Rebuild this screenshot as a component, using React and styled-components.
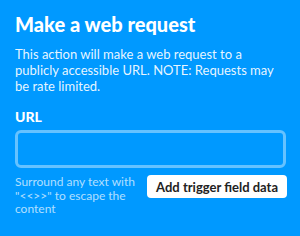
import React from 'react';
import styled, { createGlobalStyle } from 'styled-components';

const GlobalStyle = createGlobalStyle`
  html, body {
    margin: 0;
    padding: 0;
    background: #0099ff;
  }
  * {
    box-sizing: border-box;
  }
`;

const Panel = styled.div`
  width: 300px;
  height: 236px;
  background: #0099ff;
  color: #fff;
  font-family: Lato, "Noto Sans", sans-serif;
  padding: 12px 14px 0 15px;
  overflow: hidden;
`;

const Title = styled.h2`
  margin: 0;
  font-size: 20px;
  font-weight: 900;
  line-height: 24px;
`;

const Description = styled.p`
  margin: 10px 0 0;
  font-size: 13px;
  line-height: 16px;
  color: rgba(255, 255, 255, 0.92);
`;

const Label = styled.div`
  margin-top: 14px;
  font-size: 14px;
  font-weight: 900;
  line-height: 18px;
`;

const Input = styled.input`
  display: block;
  width: 271px;
  height: 38px;
  margin-top: 4px;
  background: transparent;
  border: 3px solid rgba(255, 255, 255, 0.4);
  border-radius: 6px;
  outline: none;
  color: #fff;
`;

const Footer = styled.div`
  display: flex;
  justify-content: space-between;
  align-items: flex-start;
  margin-top: 7px;
  width: 272px;
`;

const Hint = styled.div`
  width: 124px;
  font-size: 12px;
  line-height: 13.5px;
  color: rgba(255, 255, 255, 0.7);
`;

const Button = styled.button`
  background: #fff;
  border: none;
  border-radius: 4px;
  height: 23px;
  padding: 0 9px;
  font-family: Lato, "Noto Sans", sans-serif;
  font-size: 13px;
  font-weight: 700;
  color: #222;
  cursor: pointer;
`;

export default function App() {
  return (
    <>
      <GlobalStyle />
      <Panel>
        <Title>Make a web request</Title>
        <Description>
          This action will make a web request to a publicly accessible URL. NOTE: Requests may be rate limited.
        </Description>
        <Label>URL</Label>
        <Input type="text" />
        <Footer>
          <Hint>Surround any text with "&lt;&lt;&gt;&gt;" to escape the content</Hint>
          <Button>Add trigger field data</Button>
        </Footer>
      </Panel>
    </>
  );
}
